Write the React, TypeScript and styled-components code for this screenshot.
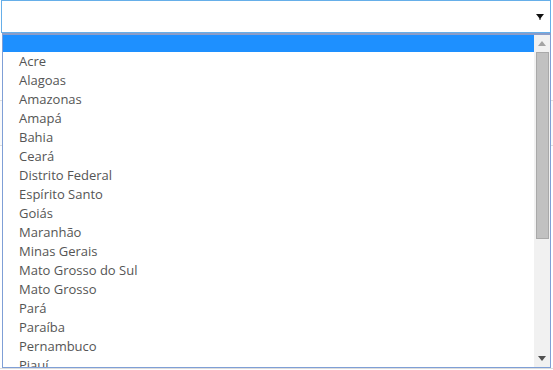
import React from "react";
import styled, { createGlobalStyle } from "styled-components";

const Global = createGlobalStyle`
  html, body { margin: 0; padding: 0; background: #ffffff; }
  body { font-family: "Open Sans", "Liberation Sans", sans-serif; }
`;

const Page = styled.div`
  position: relative;
  width: 553px;
  height: 370px;
  overflow: hidden;
  background: #ffffff;
`;

const SelectBox = styled.div`
  box-sizing: border-box;
  margin-left: 1px;
  width: 550px;
  height: 33px;
  border: 1px solid #66afe9;
  display: flex;
  align-items: center;
  justify-content: flex-end;
  padding-right: 6px;
  background: #fff;
`;

const Behind = styled.div`
  display: flex;
  flex-direction: column;
`;

const BehindRow = styled.div<{ $h: number; $bg?: string }>`
  height: ${(p) => p.$h}px;
  border-bottom: 1px solid #dddddd;
  background: ${(p) => p.$bg || "#fff"};
`;

const Dropdown = styled.div`
  position: absolute;
  left: 2px;
  top: 33px;
  width: 549px;
  height: 335px;
  box-sizing: border-box;
  border: 1px solid #7f9fd6;
  border-top: 2px solid #8a9dc9;
  background: #fff;
  display: flex;
`;

const List = styled.ul`
  flex: 1;
  margin: 0;
  padding: 0;
  list-style: none;
  overflow: hidden;
`;

const Option = styled.li<{ $active?: boolean; $h: number }>`
  height: ${(p) => p.$h}px;
  line-height: ${(p) => p.$h}px;
  padding-left: 16px;
  font-size: 13px;
  color: #555555;
  white-space: nowrap;
  background: ${(p) => (p.$active ? "#1e90ff" : "transparent")};
`;

const ScrollBar = styled.div`
  width: 16px;
  background: #f1f1f1;
  display: flex;
  flex-direction: column;
  align-items: center;
`;

const ArrowBtn = styled.div`
  height: 17px;
  width: 16px;
  display: flex;
  align-items: center;
  justify-content: center;
`;

const Track = styled.div`
  flex: 1;
  width: 16px;
  display: flex;
  flex-direction: column;
  align-items: center;
`;

const Thumb = styled.div`
  box-sizing: border-box;
  width: 13px;
  height: 187px;
  background: #c1c1c1;
  border: 1px solid #a9a9a9;
`;

const states = [
  "Acre",
  "Alagoas",
  "Amazonas",
  "Amapá",
  "Bahia",
  "Ceará",
  "Distrito Federal",
  "Espírito Santo",
  "Goiás",
  "Maranhão",
  "Minas Gerais",
  "Mato Grosso do Sul",
  "Mato Grosso",
  "Pará",
  "Paraíba",
  "Pernambuco",
  "Piauí",
];

export default function App() {
  return (
    <>
      <Global />
      <Page>
        <SelectBox>
          <svg width="8" height="7" viewBox="0 0 8 7">
            <polygon points="0,1 8,1 4,6" fill="#111" />
            <rect x="3.5" y="5" width="1" height="2" fill="#111" />
          </svg>
        </SelectBox>
        <Behind>
          <BehindRow $h={67} />
          <BehindRow $h={44} $bg="#fafafa" />
          <BehindRow $h={222} />
        </Behind>
        <Dropdown>
          <List>
            <Option $active $h={17} />
            {states.map((s) => (
              <Option key={s} $h={19}>
                {s}
              </Option>
            ))}
          </List>
          <ScrollBar>
            <ArrowBtn>
              <svg width="8" height="5" viewBox="0 0 8 5">
                <polygon points="0,5 8,5 4,0" fill="#a3a3a3" />
              </svg>
            </ArrowBtn>
            <Track>
              <Thumb />
            </Track>
            <ArrowBtn>
              <svg width="8" height="5" viewBox="0 0 8 5">
                <polygon points="0,0 8,0 4,5" fill="#505050" />
              </svg>
            </ArrowBtn>
          </ScrollBar>
        </Dropdown>
      </Page>
    </>
  );
}
